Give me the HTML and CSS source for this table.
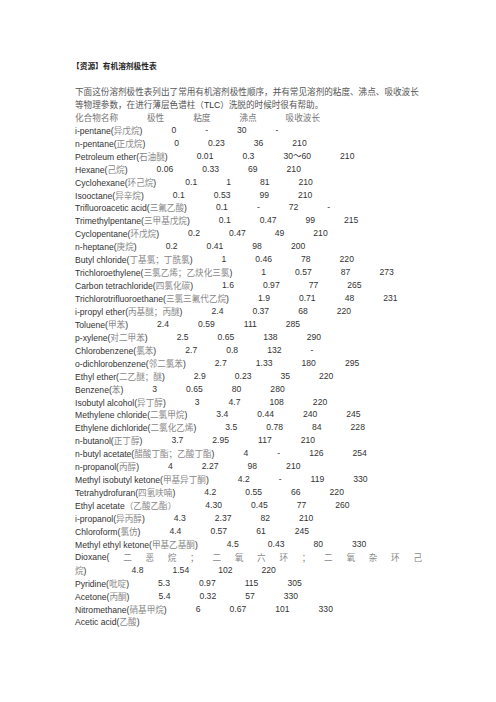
FILE: index.html
```html
<!DOCTYPE html>
<html lang="zh">
<head>
<meta charset="utf-8">
<title>有机溶剂极性表</title>
<link rel="stylesheet" href="styles.css">
</head>
<body>
<div class="doc">
  <h1 class="title">【资源】有机溶剂极性表</h1>
  <p class="intro"><span class="line">下面这份溶剂极性表列出了常用有机溶剂极性顺序，并有常见溶剂的粘度、沸点、吸收波长</span><span class="line">等物理参数，在进行薄层色谱柱（<span class="en">TLC</span>）洗脱的时候时很有帮助。</span></p>
  <div class="rows">
    <div class="row head"><span>化合物名称</span><span>极性</span><span>粘度</span><span>沸点</span><span>吸收波长</span></div>
    <div class="row"><span>i-pentane(<i>异戊烷</i>)</span><span>0</span><span>-</span><span>30</span><span>-</span></div>
    <div class="row"><span>n-pentane(<i>正戊烷</i>)</span><span>0</span><span>0.23</span><span>36</span><span>210</span></div>
    <div class="row"><span>Petroleum ether(<i>石油醚</i>)</span><span>0.01</span><span>0.3</span><span>30～60</span><span>210</span></div>
    <div class="row"><span>Hexane(<i>己烷</i>)</span><span>0.06</span><span>0.33</span><span>69</span><span>210</span></div>
    <div class="row"><span>Cyclohexane(<i>环己烷</i>)</span><span>0.1</span><span>1</span><span>81</span><span>210</span></div>
    <div class="row"><span>Isooctane(<i>异辛烷</i>)</span><span>0.1</span><span>0.53</span><span>99</span><span>210</span></div>
    <div class="row"><span>Trifluoroacetic acid(<i>三氟乙酸</i>)</span><span>0.1</span><span>-</span><span>72</span><span>-</span></div>
    <div class="row"><span>Trimethylpentane(<i>三甲基戊烷</i>)</span><span>0.1</span><span>0.47</span><span>99</span><span>215</span></div>
    <div class="row"><span>Cyclopentane(<i>环戊烷</i>)</span><span>0.2</span><span>0.47</span><span>49</span><span>210</span></div>
    <div class="row"><span>n-heptane(<i>庚烷</i>)</span><span>0.2</span><span>0.41</span><span>98</span><span>200</span></div>
    <div class="row"><span>Butyl chloride(<i>丁基氯；丁酰氯</i>)</span><span>1</span><span>0.46</span><span>78</span><span>220</span></div>
    <div class="row"><span>Trichloroethylene(<i>三氯乙烯；乙炔化三氯</i>)</span><span>1</span><span>0.57</span><span>87</span><span>273</span></div>
    <div class="row"><span>Carbon tetrachloride(<i>四氯化碳</i>)</span><span>1.6</span><span>0.97</span><span>77</span><span>265</span></div>
    <div class="row"><span>Trichlorotrifluoroethane(<i>三氯三氟代乙烷</i>)</span><span>1.9</span><span>0.71</span><span>48</span><span>231</span></div>
    <div class="row"><span>i-propyl ether(<i>丙基醚；丙醚</i>)</span><span>2.4</span><span>0.37</span><span>68</span><span>220</span></div>
    <div class="row"><span>Toluene(<i>甲苯</i>)</span><span>2.4</span><span>0.59</span><span>111</span><span>285</span></div>
    <div class="row"><span>p-xylene(<i>对二甲苯</i>)</span><span>2.5</span><span>0.65</span><span>138</span><span>290</span></div>
    <div class="row"><span>Chlorobenzene(<i>氯苯</i>)</span><span>2.7</span><span>0.8</span><span>132</span><span>-</span></div>
    <div class="row"><span>o-dichlorobenzene(<i>邻二氯苯</i>)</span><span>2.7</span><span>1.33</span><span>180</span><span>295</span></div>
    <div class="row"><span>Ethyl ether(<i>二乙醚；醚</i>)</span><span>2.9</span><span>0.23</span><span>35</span><span>220</span></div>
    <div class="row"><span>Benzene(<i>苯</i>)</span><span>3</span><span>0.65</span><span>80</span><span>280</span></div>
    <div class="row"><span>Isobutyl alcohol(<i>异丁醇</i>)</span><span>3</span><span>4.7</span><span>108</span><span>220</span></div>
    <div class="row"><span>Methylene chloride(<i>二氯甲烷</i>)</span><span>3.4</span><span>0.44</span><span>240</span><span>245</span></div>
    <div class="row"><span>Ethylene dichloride(<i>二氯化乙烯</i>)</span><span>3.5</span><span>0.78</span><span>84</span><span>228</span></div>
    <div class="row"><span>n-butanol(<i>正丁醇</i>)</span><span>3.7</span><span>2.95</span><span>117</span><span>210</span></div>
    <div class="row"><span>n-butyl acetate(<i>醋酸丁酯；乙酸丁酯</i>)</span><span>4</span><span>-</span><span>126</span><span>254</span></div>
    <div class="row"><span>n-propanol(<i>丙醇</i>)</span><span>4</span><span>2.27</span><span>98</span><span>210</span></div>
    <div class="row"><span>Methyl isobutyl ketone(<i>甲基异丁酮</i>)</span><span>4.2</span><span>-</span><span>119</span><span>330</span></div>
    <div class="row"><span>Tetrahydrofuran(<i>四氢呋喃</i>)</span><span>4.2</span><span>0.55</span><span>66</span><span>220</span></div>
    <div class="row"><span>Ethyl acetate<i>（乙酸乙酯）</i></span><span>4.30</span><span>0.45</span><span>77</span><span>260</span></div>
    <div class="row"><span>i-propanol(<i>异丙醇</i>)</span><span>4.3</span><span>2.37</span><span>82</span><span>210</span></div>
    <div class="row"><span>Chloroform(<i>氯仿</i>)</span><span>4.4</span><span>0.57</span><span>61</span><span>245</span></div>
    <div class="row"><span>Methyl ethyl ketone(<i>甲基乙基酮</i>)</span><span>4.5</span><span>0.43</span><span>80</span><span>330</span></div>
    <div class="row spread"><span>Dioxane(</span><i>二</i><i>恶</i><i>烷</i><i>；</i><i>二</i><i>氧</i><i>六</i><i>环</i><i>；</i><i>二</i><i>氧</i><i>杂</i><i>环</i><i>己</i></div>
    <div class="row cont"><span><i>烷</i>)</span><span>4.8</span><span>1.54</span><span>102</span><span>220</span></div>
    <div class="row"><span>Pyridine(<i>吡啶</i>)</span><span>5.3</span><span>0.97</span><span>115</span><span>305</span></div>
    <div class="row"><span>Acetone(<i>丙酮</i>)</span><span>5.4</span><span>0.32</span><span>57</span><span>330</span></div>
    <div class="row"><span>Nitromethane(<i>硝基甲烷</i>)</span><span>6</span><span>0.67</span><span>101</span><span>330</span></div>
    <div class="row"><span>Acetic acid(<i>乙酸</i>)</span></div>
  </div>
</div>
</body>
</html>
```
FILE: styles.css
```css
html, body {
  margin: 0;
  padding: 0;
  background: #ffffff;
}

.doc {
  width: 347px;
  padding: 60px 0 0 75px;
  font-family: "Liberation Sans", "Noto Sans CJK SC", sans-serif;
  font-size: 8.6px;
  line-height: 12.95px;
  color: #333333;
}

.title {
  margin: 0 0 12px -3px;
  height: 13px;
  font-size: 7.7px;
  line-height: 13px;
  font-weight: bold;
  color: #222222;
}

.intro {
  margin: 0;
  display: flex;
  flex-direction: column;
  color: #555555;
  font-family: "Noto Sans CJK SC", sans-serif;
}

.intro .line {
  display: block;
  height: 12.95px;
  white-space: nowrap;
}

.intro .en {
  font-family: "Liberation Sans", sans-serif;
  color: #333333;
}

.rows {
  display: flex;
  flex-direction: column;
}

.row {
  display: flex;
  gap: 29px;
  height: 12.95px;
  flex: none;
  white-space: nowrap;
}

.row > span,
.row > i {
  display: block;
  height: 12.95px;
}

.row i {
  font-style: normal;
  font-family: "Noto Sans CJK SC", sans-serif;
  color: #888888;
}

.row.head {
  font-family: "Noto Sans CJK SC", sans-serif;
  color: #777777;
}

.row.spread {
  justify-content: space-between;
  gap: 0;
}

.row.cont span:nth-child(2) {
  margin-left: 16px;
}
```
